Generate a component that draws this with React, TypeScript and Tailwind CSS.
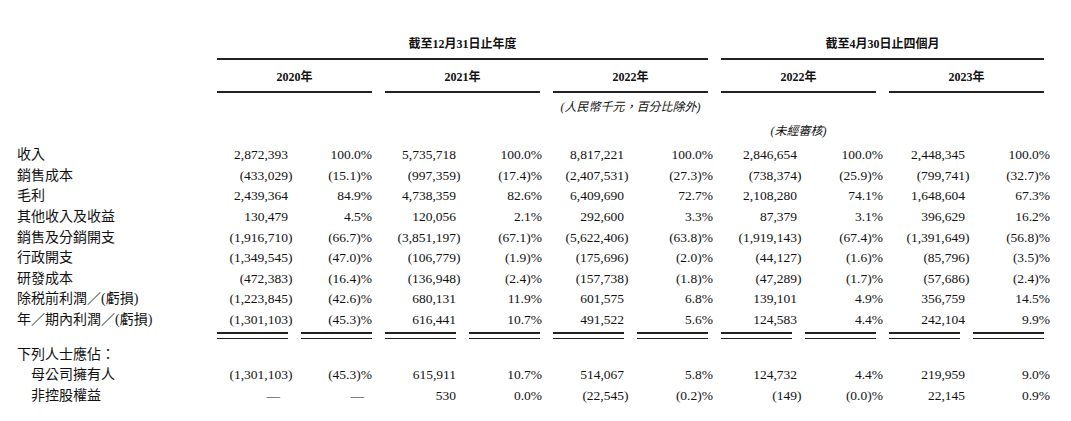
import React from "react";

const GRID = "grid grid-cols-[204px_repeat(10,71px)] gap-x-[13px]";
const FONT = { fontFamily: '"Liberation Serif", "Noto Sans CJK TC", serif' };

type Row = string[];

const rows: Row[] = [
  ["收入", "2,872,393", "100.0%", "5,735,718", "100.0%", "8,817,221", "100.0%", "2,846,654", "100.0%", "2,448,345", "100.0%"],
  ["銷售成本", "(433,029)", "(15.1)%", "(997,359)", "(17.4)%", "(2,407,531)", "(27.3)%", "(738,374)", "(25.9)%", "(799,741)", "(32.7)%"],
  ["毛利", "2,439,364", "84.9%", "4,738,359", "82.6%", "6,409,690", "72.7%", "2,108,280", "74.1%", "1,648,604", "67.3%"],
  ["其他收入及收益", "130,479", "4.5%", "120,056", "2.1%", "292,600", "3.3%", "87,379", "3.1%", "396,629", "16.2%"],
  ["銷售及分銷開支", "(1,916,710)", "(66.7)%", "(3,851,197)", "(67.1)%", "(5,622,406)", "(63.8)%", "(1,919,143)", "(67.4)%", "(1,391,649)", "(56.8)%"],
  ["行政開支", "(1,349,545)", "(47.0)%", "(106,779)", "(1.9)%", "(175,696)", "(2.0)%", "(44,127)", "(1.6)%", "(85,796)", "(3.5)%"],
  ["研發成本", "(472,383)", "(16.4)%", "(136,948)", "(2.4)%", "(157,738)", "(1.8)%", "(47,289)", "(1.7)%", "(57,686)", "(2.4)%"],
  ["除税前利潤／(虧損)", "(1,223,845)", "(42.6)%", "680,131", "11.9%", "601,575", "6.8%", "139,101", "4.9%", "356,759", "14.5%"],
  ["年／期內利潤／(虧損)", "(1,301,103)", "(45.3)%", "616,441", "10.7%", "491,522", "5.6%", "124,583", "4.4%", "242,104", "9.9%"],
];

const attrib: Row[] = [
  ["母公司擁有人", "(1,301,103)", "(45.3)%", "615,911", "10.7%", "514,067", "5.8%", "124,732", "4.4%", "219,959", "9.0%"],
  ["非控股權益", "—", "—", "530", "0.0%", "(22,545)", "(0.2)%", "(149)", "(0.0)%", "22,145", "0.9%"],
];

// per-column overhang of text beyond the ruled column edge
const SHIFT = [
  "",
  "",
  "",
  "-mr-[2px]",
  "",
  "-mr-[5px]",
  "-mr-[5px]",
  "-mr-[7px]",
  "-mr-[5px]",
  "-mr-[6px]",
];

function Cell({ v, i }: { v: string; i: number }) {
  const isAmount = i % 2 === 0;
  const base = `text-right whitespace-nowrap ${SHIFT[i]}`;
  if (v === "—") {
    return <div className={`${base} pr-[8px]`}>{v}</div>;
  }
  if (isAmount && v.endsWith(")")) {
    return (
      <div className={base}>
        {v.slice(0, -1)}
        <span className="inline-block w-0">)</span>
      </div>
    );
  }
  return <div className={base}>{v}</div>;
}

function DataRow({ r, indent }: { r: Row; indent?: boolean }) {
  return (
    <div className={`${GRID} h-[20.6px] items-center leading-[20px]`}>
      <div className={`${indent ? "pl-[31px]" : "pl-[17px]"} text-[14px] whitespace-nowrap`}>{r[0]}</div>
      {r.slice(1).map((v, i) => (
        <div key={i} className="text-[13.5px]">
          <Cell v={v} i={i} />
        </div>
      ))}
    </div>
  );
}

export default function App() {
  const years = ["2020年", "2021年", "2022年", "2022年", "2023年"];
  return (
    <div className="w-[1071px] h-[421px] bg-white text-[#111] overflow-hidden" style={FONT}>
      {/* Group titles */}
      <div className={`${GRID} h-[60px]`}>
        <div />
        <div className="col-span-6 border-b-2 border-[#222] flex items-end justify-center pb-[6px] text-[12px] font-bold leading-[16px]">
          截至12月31日止年度
        </div>
        <div className="col-span-4 border-b-2 border-[#222] flex items-end justify-center pb-[6px] text-[12px] font-bold leading-[16px]">
          截至4月30日止四個月
        </div>
      </div>
      {/* Years */}
      <div className={`${GRID} h-[33px]`}>
        <div />
        {years.map((y, i) => (
          <div
            key={i}
            className="col-span-2 border-b-2 border-[#222] pt-[9px] text-center text-[12px] font-bold leading-[16px]"
          >
            {y}
          </div>
        ))}
      </div>
      {/* Unit note */}
      <div className={`${GRID} h-[26px]`}>
        <div className="col-span-5" />
        <div className="col-span-2 pt-[6px] text-center text-[12px] italic leading-[16px] whitespace-nowrap">
          (人民幣千元，百分比除外)
        </div>
      </div>
      <div className={`${GRID} h-[26px]`}>
        <div className="col-span-7" />
        <div className="col-span-2 pt-[4px] text-center text-[12px] italic leading-[16px] whitespace-nowrap">
          (未經審核)
        </div>
      </div>
      {rows.map((r, i) => (
        <DataRow key={i} r={r} />
      ))}
      {/* double lines */}
      <div className={`${GRID} pt-[2px] h-[14px]`}>
        <div />
        {Array.from({ length: 10 }).map((_, i) => (
          <div key={i} className="h-[7px] border-t-2 border-b border-[#222]" />
        ))}
      </div>
      <div className={`${GRID} h-[20.6px] items-center leading-[20px]`}>
        <div className="pl-[17px] text-[14px] whitespace-nowrap">下列人士應佔：</div>
      </div>
      {attrib.map((r, i) => (
        <DataRow key={i} r={r} indent />
      ))}
    </div>
  );
}
